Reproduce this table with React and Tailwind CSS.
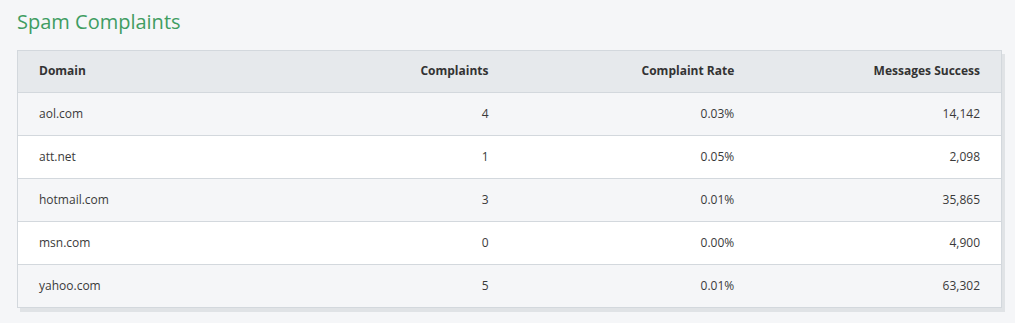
const rows = [
  { domain: "aol.com", complaints: 4, rate: "0.03%", success: "14,142" },
  { domain: "att.net", complaints: 1, rate: "0.05%", success: "2,098" },
  { domain: "hotmail.com", complaints: 3, rate: "0.01%", success: "35,865" },
  { domain: "msn.com", complaints: 0, rate: "0.00%", success: "4,900" },
  { domain: "yahoo.com", complaints: 5, rate: "0.01%", success: "63,302" },
];

export default function App() {
  return (
    <div className="min-h-[323px] bg-[#f5f6f8] px-[17px] pt-[8px] pb-4 font-['Open_Sans',sans-serif]">
      <h2 className="text-[20px] leading-[28px] text-[#3f9d62] mb-[14px]">Spam Complaints</h2>

      <div className="w-[985px] border border-[#d3d8dd] shadow-[3px_4px_0_#e0e3e6]">
        <table className="w-full table-fixed border-collapse text-[12px] text-[#3a3a3a]">
          <thead className="bg-[#e6e9ec]">
            <tr className="h-[41px] border-b border-[#d3d8dd]">
              <th className="text-left px-[21px] font-bold text-[#333]">Domain</th>
              <th className="text-right px-[21px] font-bold text-[#333]">Complaints</th>
              <th className="text-right px-[21px] font-bold text-[#333]">Complaint Rate</th>
              <th className="text-right px-[21px] font-bold text-[#333]">Messages Success</th>
            </tr>
          </thead>
          <tbody>
            {rows.map((row, i) => (
              <tr
                key={row.domain}
                className={`h-[43px] ${i < rows.length - 1 ? "border-b border-[#d3d8dd]" : ""} ${
                  i % 2 === 0 ? "bg-[#f5f6f8]" : "bg-white"
                }`}
              >
                <td className="px-[21px]">{row.domain}</td>
                <td className="px-[21px] text-right">{row.complaints}</td>
                <td className="px-[21px] text-right">{row.rate}</td>
                <td className="px-[21px] text-right">{row.success}</td>
              </tr>
            ))}
          </tbody>
        </table>
      </div>
    </div>
  );
}
